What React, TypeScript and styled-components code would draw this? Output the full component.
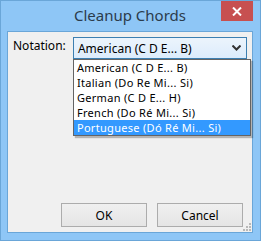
import styled, { createGlobalStyle } from "styled-components";

const Global = createGlobalStyle`
  html, body {
    margin: 0;
    padding: 0;
    width: 261px;
    height: 241px;
    overflow: hidden;
    font-family: "Noto Sans", "Open Sans", sans-serif;
  }
`;

const Frame = styled.div`
  box-sizing: border-box;
  width: 261px;
  height: 241px;
  background: #8ec6f6;
  border: 1px solid #6aa6d8;
  display: flex;
  flex-direction: column;
  padding: 0 7px 7px 6px;
`;

const TitleBar = styled.div`
  height: 30px;
  position: relative;
  display: flex;
  align-items: center;
  justify-content: center;
`;

const Title = styled.div`
  font-size: 15px;
  color: #2b3b4b;
  margin-top: -2px;
`;

const CloseButton = styled.div`
  position: absolute;
  right: 0px;
  top: 0;
  width: 32px;
  height: 20px;
  background: #c75050;
  display: flex;
  align-items: center;
  justify-content: center;
`;

const Client = styled.div`
  flex: 1;
  background: #f0f0f0;
  border: 1px solid #6aa6d8;
  position: relative;
  display: flex;
  flex-direction: column;
  padding: 5px;
`;

const Row = styled.div`
  display: flex;
  align-items: flex-start;
`;

const Label = styled.div`
  font-size: 12px;
  color: #000;
  width: 61px;
  line-height: 16px;
  margin-top: 1px;
`;

const Combo = styled.div`
  position: relative;
  width: 177px;
  height: 22px;
  box-sizing: border-box;
  border: 1px solid #3c7fb1;
  background: linear-gradient(#ecf4fc, #dcecfc);
  display: flex;
  align-items: center;
  padding-left: 4px;
  font-size: 12px;
  color: #000;
`;

const Chevron = styled.svg`
  position: absolute;
  right: 5px;
  top: 7px;
`;

const List = styled.div`
  position: absolute;
  left: -1px;
  top: 21px;
  width: 176px;
  background: #fff;
  border: 1px solid #646464;
  box-shadow: 2px 2px 1px rgba(0, 0, 0, 0.25);
  z-index: 2;
`;

const Item = styled.div<{ $selected?: boolean }>`
  height: 15px;
  line-height: 15px;
  padding-left: 3px;
  font-size: 11px;
  letter-spacing: 0.3px;
  white-space: nowrap;
  overflow: hidden;
  background: ${(p) => (p.$selected ? "#3399ff" : "transparent")};
  color: ${(p) => (p.$selected ? "#fff" : "#000")};
`;

const Spacer = styled.div`
  flex: 1;
`;

const Buttons = styled.div`
  display: flex;
  justify-content: flex-end;
  gap: 10px;
  padding-right: 4px;
`;

const Button = styled.div`
  width: 86px;
  height: 24px;
  box-sizing: border-box;
  border: 1px solid #acacac;
  background: linear-gradient(#f0f0f0, #e5e5e5);
  font-size: 12px;
  color: #000;
  display: flex;
  align-items: center;
  justify-content: center;
`;

const Grip = styled.svg`
  position: absolute;
  right: 1px;
  bottom: 1px;
`;

const options = [
  "American (C D E... B)",
  "Italian (Do Re Mi... Si)",
  "German (C D E... H)",
  "French (Do Ré Mi... Si)",
  "Portuguese (Dó Ré Mi... Si)",
];

export default function App() {
  return (
    <>
      <Global />
      <Frame>
        <TitleBar>
          <Title>Cleanup Chords</Title>
          <CloseButton>
            <svg width="10" height="9" viewBox="0 0 10 9">
              <path d="M1 0.5 L9 8.5 M9 0.5 L1 8.5" stroke="#fff" strokeWidth="2" />
            </svg>
          </CloseButton>
        </TitleBar>
        <Client>
          <Row>
            <Label>Notation:</Label>
            <Combo>
              American (C D E... B)
              <Chevron width="9" height="6" viewBox="0 0 9 6">
                <path d="M0.5 0.5 L4.5 4.5 L8.5 0.5" stroke="#333" strokeWidth="2" fill="none" />
              </Chevron>
              <List>
                {options.map((o, i) => (
                  <Item key={o} $selected={i === options.length - 1}>
                    {o}
                  </Item>
                ))}
              </List>
            </Combo>
          </Row>
          <Spacer />
          <Buttons>
            <Button>OK</Button>
            <Button>Cancel</Button>
          </Buttons>
          <Grip width="8" height="8" viewBox="0 0 8 8">
            <g fill="#b8b8b8">
              <rect x="6" y="0" width="2" height="2" />
              <rect x="3" y="3" width="2" height="2" />
              <rect x="6" y="3" width="2" height="2" />
              <rect x="0" y="6" width="2" height="2" />
              <rect x="3" y="6" width="2" height="2" />
              <rect x="6" y="6" width="2" height="2" />
            </g>
          </Grip>
        </Client>
      </Frame>
    </>
  );
}
